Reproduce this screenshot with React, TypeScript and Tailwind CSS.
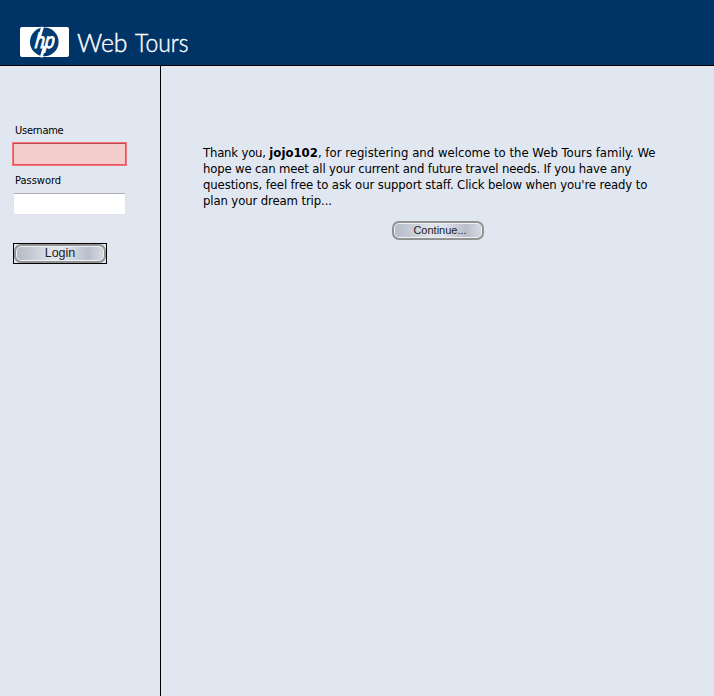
const tahoma = "font-['DejaVu_Sans_Condensed','DejaVu_Sans',sans-serif] [font-stretch:condensed]";

function Brand() {
  return (
    <svg className="ml-5 mt-[26px] block shrink-0" width="180" height="32" viewBox="20 26 180 32" role="img" aria-label="hp Web Tours">
      <rect x="20" y="27" width="49" height="30" rx="2" fill="#fff" />
      <circle cx="44.3" cy="41.9" r="14.3" fill="#003c72" />
      <path d="M42.6 26.8 L39.6 36.5 M44.6 46 L41.2 57.3" stroke="#fff" strokeWidth="2.8" />
      <g transform="translate(34.4 47.5) skewX(-6)">
        <text x="0" y="0" fontFamily="Liberation Sans, sans-serif" fontStyle="italic" fontSize="21.5" stroke="#fff" strokeWidth="0.9" fill="#fff" textLength="19.5" lengthAdjust="spacingAndGlyphs">hp</text>
      </g>
      <g fontFamily="Lato, sans-serif" fontWeight="300" fontSize="25" fill="#fff" stroke="#fff" strokeWidth="0.4">
        <text x="77" y="52" textLength="50.5" lengthAdjust="spacingAndGlyphs">Web</text>
        <text x="135" y="52" textLength="53.5" lengthAdjust="spacingAndGlyphs">Tours</text>
      </g>
    </svg>
  );
}

function PillButton({ label, size }: { label: string; size: string }) {
  return (
    <button
      className={`block h-[19px] w-[92px] rounded-[7px] border-2 border-[#929292] bg-[linear-gradient(90deg,#b9bfca_5%,#c5cad4_18%,#e0e4ed_42%,#dfe3ec_55%,#b9becb_82%,#d0d5de_96%)] font-['Liberation_Sans',sans-serif] text-[#202020] shadow-[inset_0_0_0_1px_#eef1f7] ${size}`}
    >
      {label}
    </button>
  );
}

export default function App() {
  return (
    <div className={`flex h-[696px] w-[714px] flex-col overflow-hidden bg-[#e0e7f1] text-black ${tahoma}`}>
      <header className="flex h-[66px] shrink-0 items-start border-b border-black bg-[#003366]">
        <Brand />
      </header>
      <div className="flex flex-1">
        <aside className="w-[161px] shrink-0 border-r border-black pl-3 pt-[58px]">
          <label className="ml-[3px] block h-[18px] text-[11px] leading-[14px] tracking-[-0.25px]" htmlFor="username">Username</label>
          <div className="h-6 w-[115px] border border-[#f1757a]">
            <input id="username" className="block h-[22px] w-full border border-[#e2555c] border-t-[#bf4554] bg-[#f5cccc] px-1 text-[11px] outline-none" />
          </div>
          <label className="ml-[3px] mt-2 block h-[19px] text-[11px] leading-[14px]" htmlFor="password">Password</label>
          <input id="password" type="password" className="ml-px block h-[22px] w-[113px] rounded-[2px] border border-[#e2e3ea] border-t-[#abadb3] bg-white px-1 text-[11px] outline-none" />
          <div className="ml-px mt-7 h-[21px] w-[94px] border border-black">
            <PillButton label="Login" size="text-[12.5px] leading-[13px]" />
          </div>
        </aside>
        <main className="flex-1 pl-[42px] pt-[79px]">
          <p className="whitespace-nowrap text-[13px] leading-4">
            <span className="block tracking-[0.01px]"><span className="tracking-[-0.2px]">Thank you, </span><b>jojo102</b>, for registering and welcome to the Web Tours family. We</span>
            <span className="block tracking-[-0.17px]">hope we can meet all your current and future travel needs. If you have any</span>
            <span className="block tracking-[-0.12px]">questions, feel free to ask our support staff. Click below when you're ready to</span>
            <span className="block tracking-[-0.12px]">plan your dream trip...</span>
          </p>
          <div className="ml-[189px] mt-3">
            <PillButton label="Continue..." size="pl-1 text-[11px] leading-[13px]" />
          </div>
        </main>
      </div>
    </div>
  );
}
